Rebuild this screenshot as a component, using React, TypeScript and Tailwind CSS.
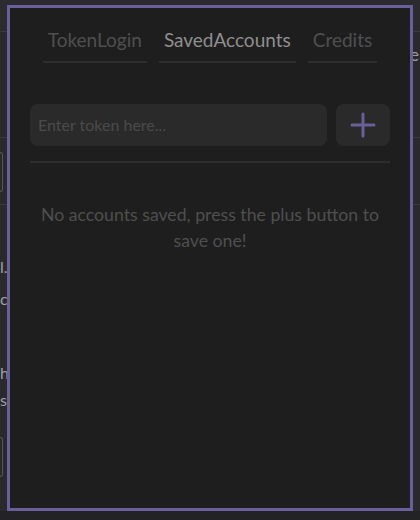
import React from "react";

export default function App() {
  const font = { fontFamily: "Lato, 'Open Sans', sans-serif" };
  return (
    <div className="relative w-[420px] h-[520px] overflow-hidden bg-[#2a2a2e]" style={font}>
      {/* background app */}
      <div className="flex flex-col w-full h-full">
        <div className="h-[32px] bg-[#2c2c30] border-b border-[#3a3a3e]" />
        <div className="h-[106px] border-b border-[#38383c] flex justify-end items-start pt-[10px] pr-[1px] text-[17px] text-[#9a9a9e]">e</div>
        <div className="h-[67px] border-b border-[#38383c] pt-[14px]">
          <div className="w-[3px] h-[40px] border-r border-y border-[#55555a] rounded-r" />
        </div>
        <div className="flex-1 pl-0 pt-[46px] text-[16px] text-[#a0a0a4] leading-[32px]">
          <div>l.</div>
          <div>c</div>
          <div className="h-[44px]" />
          <div className="leading-[28px]">h</div>
          <div className="leading-[26px]">s</div>
          <div className="mt-[24px] w-[3px] h-[40px] border-r border-y border-[#55555a] rounded-r" />
        </div>
        <div className="h-[9px] bg-[#232326]" />
      </div>

      {/* modal */}
      <div className="absolute left-[7px] top-[5px] w-[406px] h-[506px] border-[3px] border-[#6a5e9b] bg-[#1e1e1e] flex flex-col px-[20px]">
        <div className="flex justify-center gap-[12px] pt-[19px]">
          <div className="px-[5px] pb-[8px] border-b-[2px] border-[#2e2e2e] text-[19px] leading-[26px] text-[#4f4f4f]">TokenLogin</div>
          <div className="px-[5px] pb-[8px] border-b-[2px] border-[#2e2e2e] text-[19px] leading-[26px] text-[#8f8f8f]">SavedAccounts</div>
          <div className="px-[5px] pb-[8px] border-b-[2px] border-[#2e2e2e] text-[19px] leading-[26px] text-[#4f4f4f]">Credits</div>
        </div>
        <div className="flex gap-[9px] mt-[41px]">
          <div className="flex-1 h-[42px] rounded-[8px] bg-[#2a2a2a] flex items-center px-[8px] text-[16px] text-[#4a4a4a]">
            Enter token here...
          </div>
          <div className="w-[54px] h-[42px] rounded-[8px] bg-[#2a2a2a] flex items-center justify-center">
            <svg width="26" height="26" viewBox="0 0 26 26">
              <path d="M13 2 V24 M2 13 H24" stroke="#6a5e9b" strokeWidth="3" strokeLinecap="round" />
            </svg>
          </div>
        </div>
        <div className="mt-[15px] h-[2px] bg-[#2e2e2e]" />
        <div className="mt-[39px] text-center text-[17.7px] leading-[26px] text-[#4f4f4f] px-[4px]">
          No accounts saved, press the plus button to save one!
        </div>
      </div>
    </div>
  );
}
